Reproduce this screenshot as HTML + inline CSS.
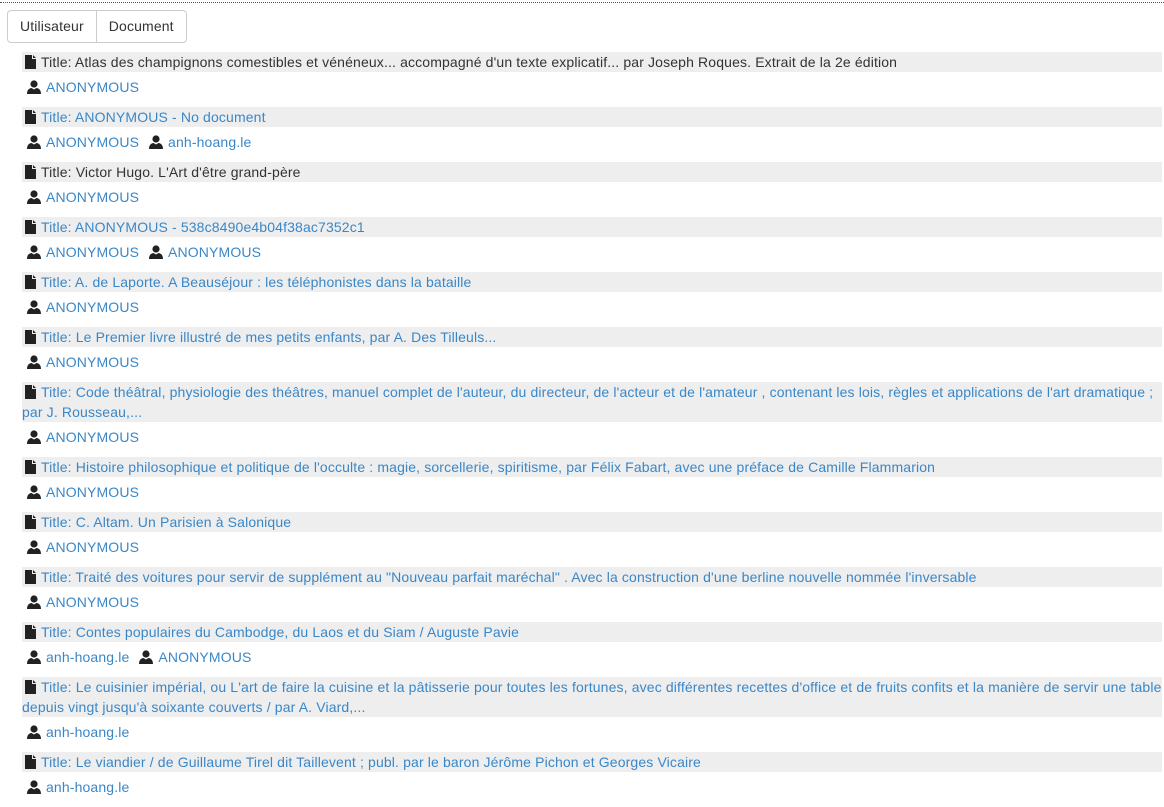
<!DOCTYPE html>
<html><head><meta charset="utf-8"><style>
body{margin:0;font-family:"Liberation Sans",sans-serif;font-size:14px;line-height:20px;color:#333;background:#fff;width:1164px;height:804px;overflow:hidden;letter-spacing:0.14px}
.top{position:absolute;left:0;top:2px;width:1164px;border-top:1px dotted #555}
.btns{position:absolute;left:7px;top:10px;display:flex;border:1px solid #ccc;border-radius:4px;height:31px}
.btns div{padding:0 12px;line-height:31px;color:#333}
.btns div+div{border-left:1px solid #ccc}
.list{position:absolute;left:22px;top:52px;width:1140px}
.t{background:#eee;padding-left:19px;position:relative}
.t svg{position:absolute;left:3px;top:3px}
.u{margin:5px 0 10px 5px;height:20px}
.u span{display:inline-block;margin-right:10px;position:relative;padding-left:19px}
.u svg{position:absolute;left:0;top:3px}
a{color:#3a87c8;text-decoration:none}
.bl{color:#333}
</style></head><body>
<div class="top"></div>
<div class="btns"><div>Utilisateur</div><div>Document</div></div>
<svg width="0" height="0" style="position:absolute"><defs>
<symbol id="f" viewBox="0 0 11 14"><path d="M0 0H7V4H11V14H0Z M8 0L11 3H8Z" fill="#222"/></symbol>
<symbol id="p" viewBox="0 0 14 14"><circle cx="7" cy="4" r="3.6" fill="#222"/><path d="M0 14C0 9.5 2.5 8.3 4.5 8L7 9.5L9.5 8C11.5 8.3 14 9.5 14 14Z" fill="#222"/></symbol>
</defs></svg>
<div class="list">
<div class="t"><svg width="11" height="14"><use href="#f"/></svg><span class="bl">Title: Atlas des champignons comestibles et vénéneux... accompagné d'un texte explicatif... par Joseph Roques. Extrait de la 2e édition</span></div>
<div class="u"><span><svg width="14" height="14"><use href="#p"/></svg><a>ANONYMOUS</a></span></div>
<div class="t"><svg width="11" height="14"><use href="#f"/></svg><a>Title: ANONYMOUS - No document</a></div>
<div class="u"><span><svg width="14" height="14"><use href="#p"/></svg><a>ANONYMOUS</a></span><span><svg width="14" height="14"><use href="#p"/></svg><a>anh-hoang.le</a></span></div>
<div class="t"><svg width="11" height="14"><use href="#f"/></svg><span class="bl">Title: Victor Hugo. L'Art d'être grand-père</span></div>
<div class="u"><span><svg width="14" height="14"><use href="#p"/></svg><a>ANONYMOUS</a></span></div>
<div class="t"><svg width="11" height="14"><use href="#f"/></svg><a>Title: ANONYMOUS - 538c8490e4b04f38ac7352c1</a></div>
<div class="u"><span><svg width="14" height="14"><use href="#p"/></svg><a>ANONYMOUS</a></span><span><svg width="14" height="14"><use href="#p"/></svg><a>ANONYMOUS</a></span></div>
<div class="t"><svg width="11" height="14"><use href="#f"/></svg><a>Title: A. de Laporte. A Beauséjour : les téléphonistes dans la bataille</a></div>
<div class="u"><span><svg width="14" height="14"><use href="#p"/></svg><a>ANONYMOUS</a></span></div>
<div class="t"><svg width="11" height="14"><use href="#f"/></svg><a>Title: Le Premier livre illustré de mes petits enfants, par A. Des Tilleuls...</a></div>
<div class="u"><span><svg width="14" height="14"><use href="#p"/></svg><a>ANONYMOUS</a></span></div>
<div class="t" style="padding-left:0;text-indent:19px"><svg width="11" height="14"><use href="#f"/></svg><a>Title: Code théâtral, physiologie des théâtres, manuel complet de l'auteur, du directeur, de l'acteur et de l'amateur , contenant les lois, règles et applications de l'art dramatique ;<br>par J. Rousseau,...</a></div>
<div class="u"><span><svg width="14" height="14"><use href="#p"/></svg><a>ANONYMOUS</a></span></div>
<div class="t"><svg width="11" height="14"><use href="#f"/></svg><a>Title: Histoire philosophique et politique de l'occulte : magie, sorcellerie, spiritisme, par Félix Fabart, avec une préface de Camille Flammarion</a></div>
<div class="u"><span><svg width="14" height="14"><use href="#p"/></svg><a>ANONYMOUS</a></span></div>
<div class="t"><svg width="11" height="14"><use href="#f"/></svg><a>Title: C. Altam. Un Parisien à Salonique</a></div>
<div class="u"><span><svg width="14" height="14"><use href="#p"/></svg><a>ANONYMOUS</a></span></div>
<div class="t"><svg width="11" height="14"><use href="#f"/></svg><a>Title: Traité des voitures pour servir de supplément au "Nouveau parfait maréchal" . Avec la construction d'une berline nouvelle nommée l'inversable</a></div>
<div class="u"><span><svg width="14" height="14"><use href="#p"/></svg><a>ANONYMOUS</a></span></div>
<div class="t"><svg width="11" height="14"><use href="#f"/></svg><a>Title: Contes populaires du Cambodge, du Laos et du Siam / Auguste Pavie</a></div>
<div class="u"><span><svg width="14" height="14"><use href="#p"/></svg><a>anh-hoang.le</a></span><span><svg width="14" height="14"><use href="#p"/></svg><a>ANONYMOUS</a></span></div>
<div class="t" style="padding-left:0;text-indent:19px;white-space:nowrap;overflow:hidden"><svg width="11" height="14"><use href="#f"/></svg><a>Title: Le cuisinier impérial, ou L'art de faire la cuisine et la pâtisserie pour toutes les fortunes, avec différentes recettes d'office et de fruits confits et la manière de servir une table<br>depuis vingt jusqu'à soixante couverts / par A. Viard,...</a></div>
<div class="u"><span><svg width="14" height="14"><use href="#p"/></svg><a>anh-hoang.le</a></span></div>
<div class="t"><svg width="11" height="14"><use href="#f"/></svg><a>Title: Le viandier / de Guillaume Tirel dit Taillevent ; publ. par le baron Jérôme Pichon et Georges Vicaire</a></div>
<div class="u"><span><svg width="14" height="14"><use href="#p"/></svg><a>anh-hoang.le</a></span></div>
</div>
</body></html>
